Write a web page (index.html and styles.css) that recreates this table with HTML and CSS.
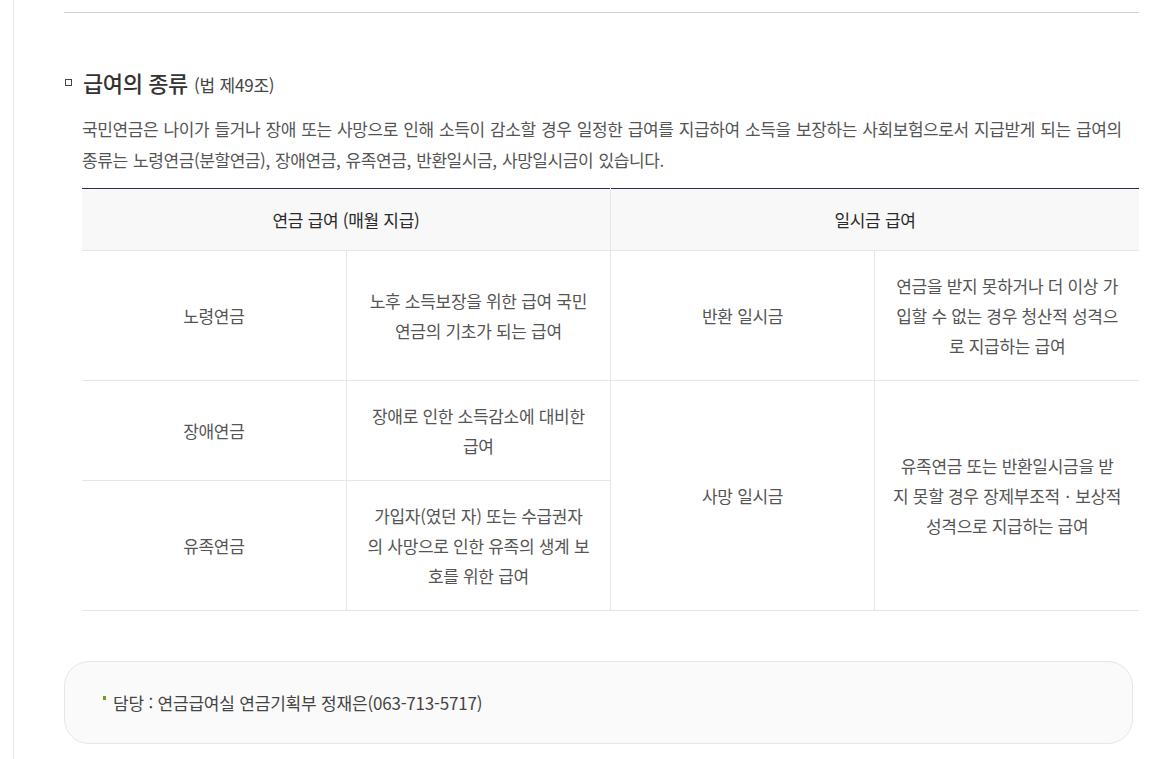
FILE: index.html
```html
<!DOCTYPE html>
<html lang="ko">
<head>
<meta charset="utf-8">
<title>급여의 종류</title>
<link rel="stylesheet" href="styles.css">
</head>
<body>
<div class="page">
  <div class="content">
    <div class="rule"></div>

    <section class="section">
      <h3 class="title"><span class="title-mark"></span>급여의 종류 <small class="title-sub">(법 제49조)</small></h3>
      <p class="desc">국민연금은 나이가 들거나 장애 또는 사망으로 인해 소득이 감소할 경우 일정한 급여를 지급하여 소득을 보장하는 사회보험으로서 지급받게 되는 급여의<br>종류는 노령연금(분할연금), 장애연금, 유족연금, 반환일시금, 사망일시금이 있습니다.</p>

      <table class="benefit-table">
        <colgroup>
          <col class="c"><col class="c"><col class="c"><col class="c">
        </colgroup>
        <thead>
          <tr>
            <th colspan="2">연금 급여 (매월 지급)</th>
            <th colspan="2">일시금 급여</th>
          </tr>
        </thead>
        <tbody>
          <tr class="r3">
            <td>노령연금</td>
            <td>노후 소득보장을 위한 급여 국민<br>연금의 기초가 되는 급여</td>
            <td>반환 일시금</td>
            <td>연금을 받지 못하거나 더 이상 가<br>입할 수 없는 경우 청산적 성격으<br>로 지급하는 급여</td>
          </tr>
          <tr class="r2">
            <td>장애연금</td>
            <td>장애로 인한 소득감소에 대비한<br>급여</td>
            <td rowspan="2">사망 일시금</td>
            <td rowspan="2">유족연금 또는 반환일시금을 받<br>지 못할 경우 장제부조적ㆍ보상적<br>성격으로 지급하는 급여</td>
          </tr>
          <tr class="r3">
            <td>유족연금</td>
            <td>가입자(였던 자) 또는 수급권자<br>의 사망으로 인한 유족의 생계 보<br>호를 위한 급여</td>
          </tr>
        </tbody>
      </table>
    </section>

    <div class="contact">
      <p class="contact-text"><span class="contact-mark"></span>담당 : 연금급여실 연금기획부 정재은(063-713-5717)</p>
    </div>
  </div>
</div>
</body>
</html>
```

FILE: styles.css
```css
* { box-sizing: border-box; }

html, body {
  margin: 0;
  padding: 0;
  background: #fff;
}

body {
  font-family: "Noto Sans CJK KR", "Noto Sans", sans-serif;
  color: #555;
  overflow: hidden;
}

.page {
  margin-left: 13px;
  border-left: 1px solid #e6e6e6;
  min-height: 759px;
  padding: 12px 20px 0 50px;
}

.content {
  width: 1075px;
}

.rule {
  height: 1px;
  background: #cfcfcf;
}

.section {
  padding-top: 54px;
}

.title {
  display: flex;
  align-items: baseline;
  margin: 0;
  font-size: 22px;
  font-weight: 500;
  color: #333;
  letter-spacing: -0.4px;
  line-height: 30px;
}

.title-mark {
  align-self: center;
  width: 7px;
  height: 7px;
  border: 1.5px solid #444;
  margin: 0 11px 0 1px;
  position: relative;
  top: -1px;
}

.title-sub {
  font-size: 17px;
  font-weight: 400;
  color: #444;
  margin-left: 6px;
  letter-spacing: -0.2px;
}

.desc {
  margin: 13px 0 0 18px;
  font-size: 17px;
  line-height: 31px;
  letter-spacing: -0.42px;
  word-spacing: 1px;
  color: #555;
  white-space: nowrap;
}

.benefit-table {
  margin: 13px 0 0 18px;
  width: 1057px;
  border-collapse: collapse;
  table-layout: fixed;
  border-top: 1px solid #2b2a5c;
}

.benefit-table th {
  height: 62px;
  background: #f8f8f8;
  font-size: 17px;
  font-weight: 400;
  color: #2a2a2a;
  letter-spacing: -0.3px;
  border-bottom: 1px solid #e6e6e6;
  border-left: 1px solid #e6e6e6;
  padding: 0;
}

.benefit-table td {
  text-align: center;
  vertical-align: middle;
  font-size: 17px;
  line-height: 30px;
  letter-spacing: -0.3px;
  color: #555;
  padding: 0 6px;
  border-bottom: 1px solid #e6e6e6;
  border-left: 1px solid #e6e6e6;
  white-space: nowrap;
}

.benefit-table th:first-child,
.benefit-table tr > td:first-child {
  border-left: 0;
}

.benefit-table tr.r3 td { height: 130px; }
.benefit-table tr.r2 td { height: 100px; }

.benefit-table tr.r2 td[rowspan] {
  border-left: 1px solid #e6e6e6;
}

.contact {
  margin-top: 50px;
  width: 1069px;
  height: 83px;
  border: 1px solid #e6e6e6;
  border-radius: 25px;
  background: #fafafa;
  display: flex;
  align-items: center;
  padding-left: 38px;
}

.contact-text {
  margin: 0;
  font-size: 17px;
  color: #444;
  letter-spacing: -0.2px;
  display: flex;
  align-items: center;
}

.contact-mark {
  width: 3px;
  height: 4px;
  background: #6d9f22;
  margin-right: 7px;
  position: relative;
  top: -5px;
}
```
